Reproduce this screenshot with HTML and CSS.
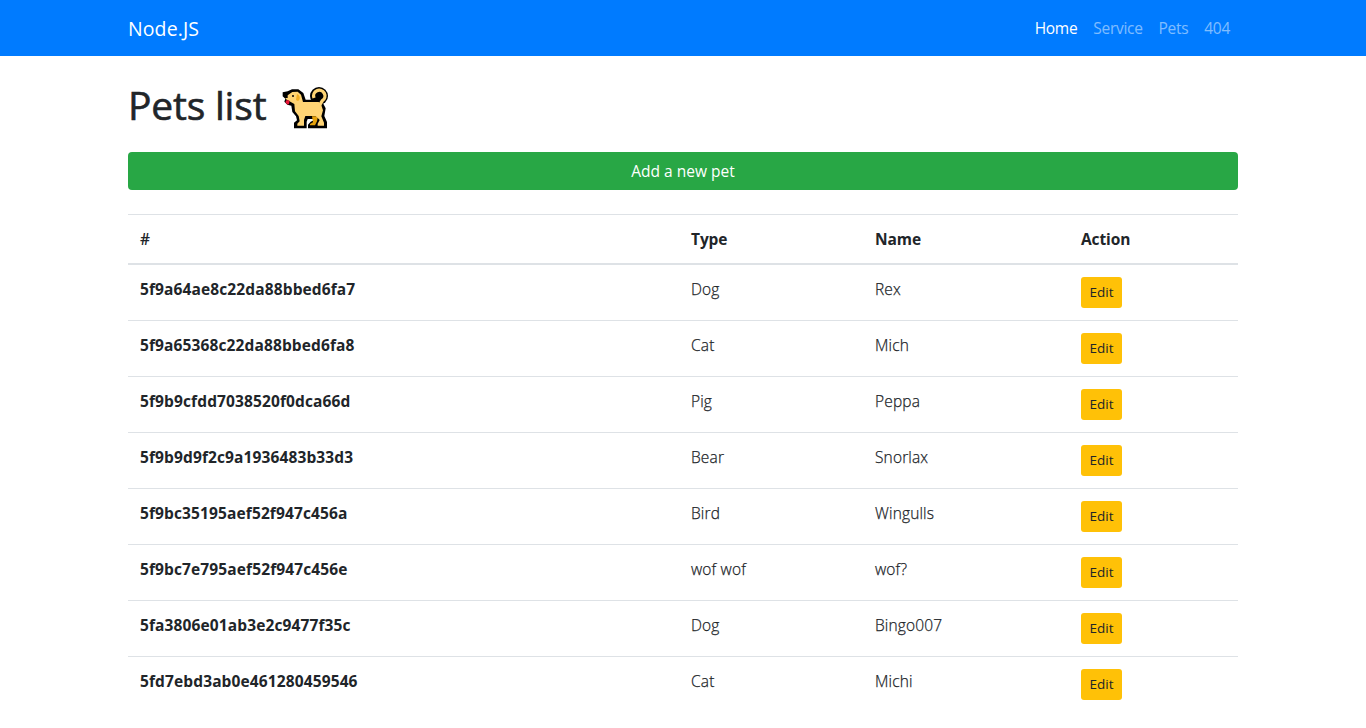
FILE: index.html
```html
<!DOCTYPE html>
<html lang="en">
<head>
<meta charset="utf-8">
<title>Pets list</title>
<link rel="stylesheet" href="styles.css">
</head>
<body>
<nav class="navbar">
  <div class="container navbar-inner">
    <a class="brand">Node.JS</a>
    <ul class="nav-list">
      <li class="nav-link active">Home</li>
      <li class="nav-link">Service</li>
      <li class="nav-link">Pets</li>
      <li class="nav-link">404</li>
    </ul>
  </div>
</nav>
<main class="container">
  <h1 class="title"><span class="title-text">Pets list</span>
    <svg class="dog" viewBox="0 0 180 168" aria-label="dog">
      <path d="M20 37L35 34L48 28H67L82 39L89 59H112L138 64L149 85L145 108L153 126V145H96V134L104 125L114 121V117H95L92 125V145H54V128L63 121L60 109L49 96L46 77L34 74L25 65L28 56L20 49Z"/>
      <circle cx="129" cy="48" r="27"/>
      <path d="M108 109H126L123 124L117 136H102V132L111 127Z" fill="#e5a10b"/>
      <path d="M35 46L49 36L65 35L75 44L81 66H128L136 76L141 91L136 109L144 128V137H125V131L131 120L119 108H88L84 120V137H64V131L71 124L68 108L57 94L55 72L43 65L29 57V54H35Z" fill="#ffd474"/>
      <path d="M114 54A17 17 0 1 1 139 62L128 80" fill="none" stroke="#ffd474" stroke-width="10"/>
      <path d="M63 42q10 4 8 15q-4 10-11 2z" fill="#f2ae24"/>
      <circle cx="51" cy="48" r="3"/>
      <path d="M31 61h9v8q-2 6-7 4l-5-6z" fill="#ed1438"/>
    </svg>
  </h1>
  <a class="btn btn-add">Add a new pet</a>
  <table class="table">
    <colgroup><col class="c-id"><col class="c-type"><col class="c-name"><col class="c-action"></colgroup>
    <thead><tr><th class="hash">#</th><th>Type</th><th>Name</th><th>Action</th></tr></thead>
    <tbody>
      <tr><th>5f9a64ae8c22da88bbed6fa7</th><td>Dog</td><td>Rex</td><td><a class="btn btn-edit">Edit</a></td></tr>
      <tr><th>5f9a65368c22da88bbed6fa8</th><td>Cat</td><td>Mich</td><td><a class="btn btn-edit">Edit</a></td></tr>
      <tr><th>5f9b9cfdd7038520f0dca66d</th><td>Pig</td><td>Peppa</td><td><a class="btn btn-edit">Edit</a></td></tr>
      <tr><th>5f9b9d9f2c9a1936483b33d3</th><td>Bear</td><td>Snorlax</td><td><a class="btn btn-edit">Edit</a></td></tr>
      <tr><th>5f9bc35195aef52f947c456a</th><td>Bird</td><td>Wingulls</td><td><a class="btn btn-edit">Edit</a></td></tr>
      <tr><th>5f9bc7e795aef52f947c456e</th><td>wof wof</td><td>wof?</td><td><a class="btn btn-edit">Edit</a></td></tr>
      <tr><th>5fa3806e01ab3e2c9477f35c</th><td>Dog</td><td>Bingo007</td><td><a class="btn btn-edit">Edit</a></td></tr>
      <tr><th>5fd7ebd3ab0e461280459546</th><td>Cat</td><td>Michi</td><td><a class="btn btn-edit">Edit</a></td></tr>
    </tbody>
  </table>
</main>
</body>
</html>
```
FILE: styles.css
```css
* { box-sizing: border-box; }
html { overflow: hidden; }
body {
  margin: 0;
  height: 728px;
  overflow: hidden;
  background: #fff;
  color: #212529;
  font: 400 15.5px/24px "Segoe UI", "Open Sans", "Noto Sans", sans-serif;
}
.container { width: 1110px; margin: 0 auto; }
.navbar { height: 56px; background: #007bff; }
.navbar-inner { height: 56px; display: flex; align-items: center; justify-content: space-between; }
.brand { padding-top: 2px; color: #fff; font-size: 19.5px; line-height: 30px; letter-spacing: 0.1px; }
.nav-list { display: flex; margin: 0; padding: 0; list-style: none; }
.nav-link { padding: 8px; color: rgba(255, 255, 255, .5); letter-spacing: -0.3px; }
.nav-link.active { color: #fff; }
.title { display: flex; height: 56px; margin: 24px 0 16px; font-size: 39px; line-height: 50px; font-weight: 400; }
.title-text { width: 148px; white-space: nowrap; letter-spacing: -0.2px; -webkit-text-stroke: 0.6px #212529; }
.dog { width: 60px; height: 56px; }
.btn { display: block; text-align: center; border-radius: 4px; }
.btn-add { height: 38px; padding: 7px 12px; background: #28a745; color: #fff; }
.table { width: 1110px; margin-top: 24px; border-collapse: collapse; table-layout: fixed; }
.c-id { width: 551px; }
.c-type { width: 184px; }
.c-name { width: 206px; }
.c-action { width: 169px; }
.table th, .table td { padding: 12px; text-align: left; vertical-align: top; border-top: 1px solid #dee2e6; }
.table td { font-weight: 300; letter-spacing: 0.15px; -webkit-text-stroke: 0.25px #212529; }
.table th { font-weight: 700; letter-spacing: 0.12px; }
.table thead th { border-bottom: 2px solid #dee2e6; letter-spacing: -0.1px; }
.table .hash { font-weight: 600; }
.btn-edit { width: 41px; height: 31px; padding: 5px 0; border-radius: 3px; background: #ffc107; color: #212529; font-size: 13.5px; line-height: 21px; font-weight: 400; letter-spacing: 0; -webkit-text-stroke: 0; }
```
